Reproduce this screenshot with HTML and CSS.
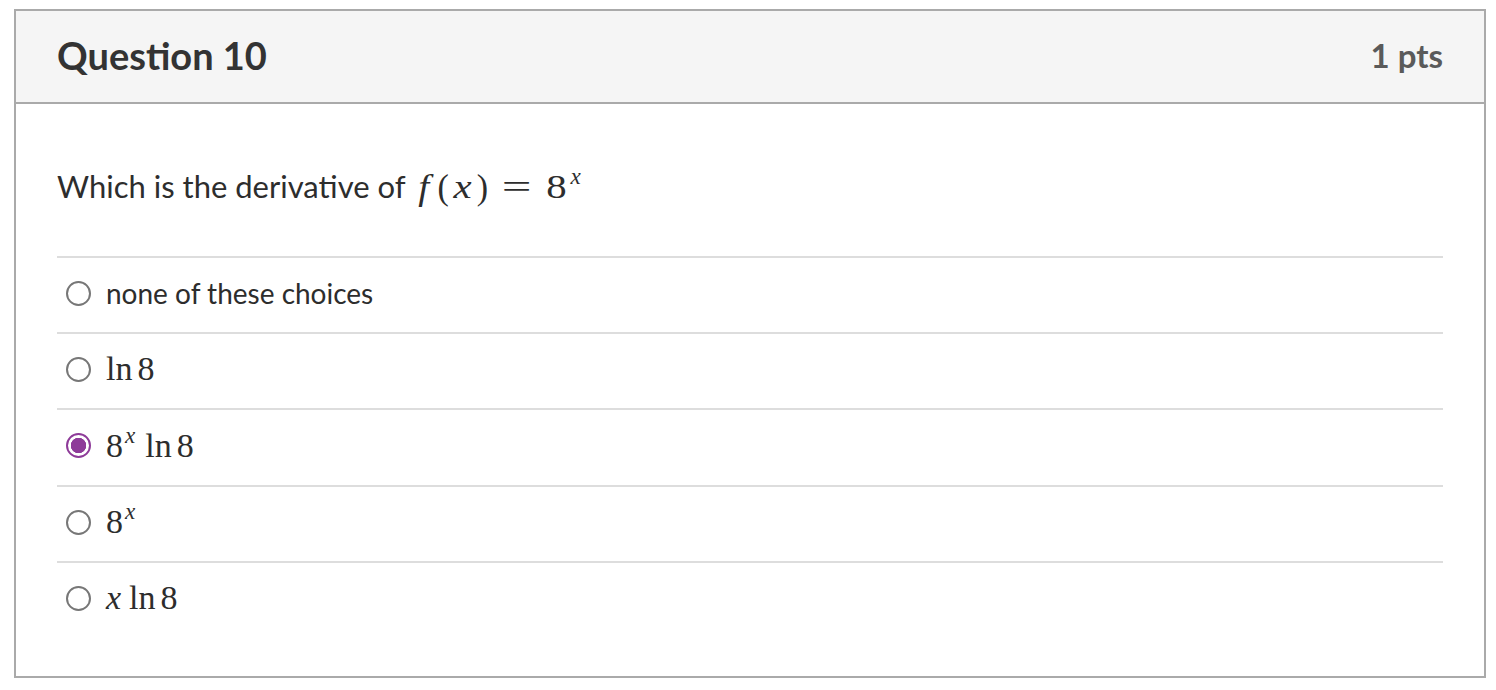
FILE: index.html
```html
<!DOCTYPE html>
<html>
<head>
<meta charset="utf-8">
<link rel="stylesheet" href="styles.css">
</head>
<body>
<div class="card">
  <div class="header">
    <h2 class="title">Question 10</h2>
    <div class="pts">1 pts</div>
  </div>
  <div class="content">
    <p class="question">Which is the derivative of <span class="math qmath"><i class="f">f</i><span class="po">(</span><i class="qx">x</i><span class="pc">)</span><span class="eq">=</span><span class="eight">8</span><sup><i>x</i></sup></span></p>
    <ul class="answers">
      <li class="answer"><span class="radio"></span><span class="label">none of these choices</span></li>
      <li class="answer"><span class="radio"></span><span class="label math">ln<span class="thin"></span>8</span></li>
      <li class="answer"><span class="radio checked"></span><span class="label math">8<sup><i>x</i></sup><span class="gap"></span>ln<span class="thin"></span>8</span></li>
      <li class="answer"><span class="radio"></span><span class="label math">8<sup><i>x</i></sup></span></li>
      <li class="answer"><span class="radio"></span><span class="label math"><i>x</i><span class="thin2"></span>ln<span class="thin"></span>8</span></li>
    </ul>
  </div>
</div>
</body>
</html>
```
FILE: styles.css
```css
html, body {
  margin: 0;
  padding: 0;
  background: #fff;
}
body {
  font-family: Lato, "Open Sans", sans-serif;
  color: #2d3b45;
}
.card {
  box-sizing: border-box;
  margin: 9px 0 0 14px;
  width: 1472px;
  height: 669px;
  border: 2px solid #aaaaaa;
}
.header {
  box-sizing: border-box;
  height: 93px;
  background: #f5f5f5;
  border-bottom: 2px solid #aaaaaa;
  display: flex;
  align-items: center;
  justify-content: space-between;
  padding: 0 41px 4px 41px;
}
.title {
  margin: 0;
  font-size: 38px;
  font-weight: 700;
  color: #333333;
}
.pts {
  font-size: 33px;
  font-weight: 700;
  color: #5a5a5a;
}
.content {
  padding: 0 41px;
}
.question {
  margin: 0;
  padding-top: 64px;
  height: 88px;
  box-sizing: content-box;
  font-size: 31px;
  line-height: 36px;
  color: #2d2d2d;
}
.math {
  font-family: "Liberation Serif", "DejaVu Serif", serif;
  font-size: 34px;
}
.math i {
  font-style: italic;
}
.qmath {
  margin-left: 4px;
}
.qmath .f {
  display: inline-block;
  transform: scale(1.15, 1.08);
  margin-left: 2px;
  margin-right: 9px;
}
.qmath .po,
.qmath .pc {
  display: inline-block;
  transform: scaleY(1.08);
}
.qmath .qx {
  display: inline-block;
  transform: scaleX(1.2);
  margin: 0 7px 0 6px;
}
.eq {
  display: inline-block;
  transform: scaleX(1.55);
  margin: 0 22px 0 19px;
}
.qmath .eight {
  display: inline-block;
  transform: scaleX(1.2);
  margin-right: 3px;
}
.math sup {
  font-size: 0.68em;
  line-height: 0;
  margin-left: 2px;
  vertical-align: 0.6em;
}
.thin {
  display: inline-block;
  width: 5px;
}
.thin2 {
  display: inline-block;
  width: 8px;
}
.gap {
  display: inline-block;
  width: 10px;
}
.answers {
  list-style: none;
  margin: 0;
  padding: 0;
}
.answer {
  box-sizing: border-box;
  height: 76px;
  border-top: 2px solid #dddddd;
  display: flex;
  align-items: center;
  padding-left: 9px;
  padding-bottom: 4px;
  font-size: 28px;
  color: #2d2d2d;
}
.answer:nth-child(3) {
  height: 77px;
}
.radio {
  box-sizing: border-box;
  width: 25px;
  height: 25px;
  border: 2px solid #777777;
  border-radius: 50%;
  margin-right: 15px;
  flex: none;
}
.radio.checked {
  border: 2.5px solid #8e3b99;
  background: radial-gradient(circle, #8e3b99 0 7.5px, #ffffff 8px);
}
.label.math {
  font-size: 34px;
}
```
